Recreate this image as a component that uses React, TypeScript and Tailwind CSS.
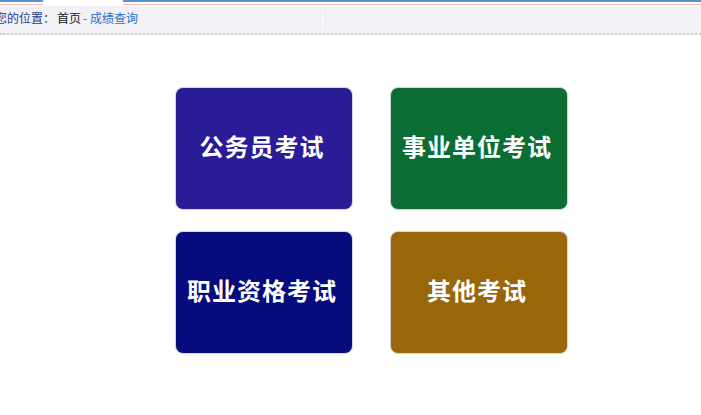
const cards = [
  { label: "公务员考试", bg: "bg-[#2a1b97]" },
  { label: "事业单位考试", bg: "bg-[#0a6d34]" },
  { label: "职业资格考试", bg: "bg-[#060b7d]" },
  { label: "其他考试", bg: "bg-[#99660a]" },
];

function TopStrip() {
  return (
    <div className="flex h-[6px]">
      <div className="w-[43px] border-t-2 border-[#5f8fcf]">
        <div className="mt-[2px] h-px bg-[#f3b3ba]" />
      </div>
      <div className="w-[80px] bg-white" />
      <div className="flex-1 border-t-2 border-[#5f8fcf]">
        <div className="mt-[2px] h-px bg-[#f3b3ba]" />
      </div>
    </div>
  );
}

function Breadcrumb() {
  return (
    <div className="flex h-[29px] items-center border-b-2 border-dotted border-[#cfcfd4] bg-[#f1f1f6] pb-[4px] text-[12px] leading-none">
      <div className="ml-[-5px] flex w-[327px] items-center whitespace-nowrap">
        <span className="text-[#24408e]">您的位置：</span>
        <span className="ml-[2px] text-[#222]">首页</span>
        <span className="ml-[2px] text-[#2a6fce]">- 成绩查询</span>
      </div>
      <div className="mt-[4px] h-[16px] w-px bg-white" />
    </div>
  );
}

export default function App() {
  return (
    <div
      className="min-h-[415px] bg-white"
      style={{ fontFamily: '"Noto Sans CJK SC", "Noto Sans", sans-serif' }}
    >
      <TopStrip />
      <Breadcrumb />
      <div className="grid w-fit grid-cols-[178px_178px] gap-x-[37px] gap-y-[21px] pl-[175px] pt-[52px]">
        {cards.map((card) => (
          <div
            key={card.label}
            className={`flex h-[123px] items-center justify-center rounded-[8px] border border-[#d6d6e0] pb-[5px] pr-[4px] ${card.bg}`}
          >
            <span className="text-[24px] font-bold tracking-[1px] text-white">{card.label}</span>
          </div>
        ))}
      </div>
    </div>
  );
}
